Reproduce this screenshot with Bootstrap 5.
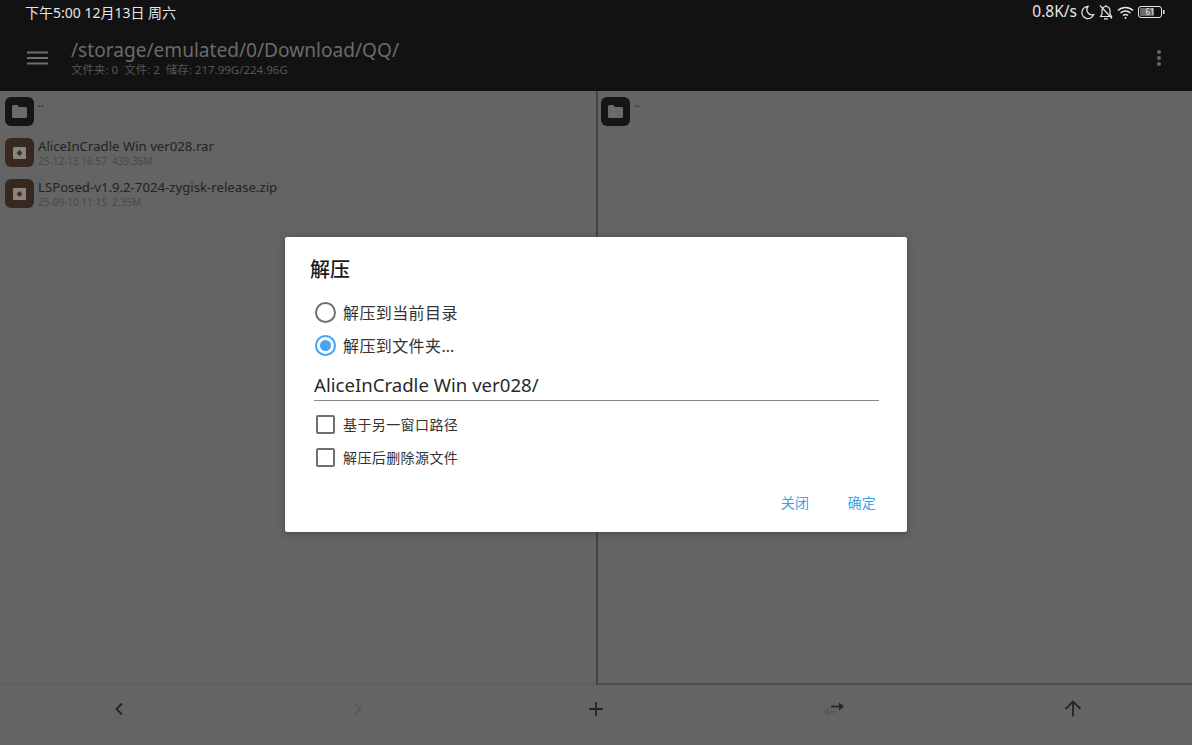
<!DOCTYPE html>
<html lang="zh-CN">

<head>
    <meta charset="UTF-8">
    <title>解压</title>
    <meta name="viewport" content="width=device-width, initial-scale=1.0">
    <link href="https://cdn.jsdelivr.net/npm/bootstrap@5.3.0/dist/css/bootstrap.min.css" rel="stylesheet">
    <style>
        html, body { height: 100%; }
        body {
            background: #646464;
            overflow: hidden;
            font-family: "Noto Sans", "Noto Sans CJK SC", sans-serif;
            color: #1c1c1c;
        }
        .app-head { height: 91px; background: #121212; flex: none; }
        .status-row { height: 24px; padding: 0 27px 0 25px; color: #e6e6e6; font-size: 14px; }
        .status-right { font-size: 15.5px; gap: 3px; }
        .title-row { height: 67px; padding: 0 31px 0 27px; }
        .menu-icon { margin-right: 23px; }
        .path-title { font-size: 19.1px; line-height: 25px; color: #6b6b6b; }
        .path-sub { font-size: 11.5px; line-height: 14px; color: #565656; white-space: pre; }

        .panes { flex: 1 1 auto; min-height: 0; }
        .pane { flex: 1 1 0; padding: 5px; }
        .pane-right { border-left: 2px solid #444; border-bottom: 2px solid #4c4c4c; flex: 0 0 596px; padding-left: 3px; }
        .pane-left { border-bottom: 1px solid #5a5a5a; }
        .file-row { height: 41px; gap: 4px; }
        .file-tile {
            width: 29px; height: 29px; border-radius: 6px;
            background: #37291f; flex: none; margin-top: 1px;
        }
        .file-tile.is-dir { background: #151515; }
        .file-name { font-size: 13.2px; line-height: 18px; color: #222; }
        .file-name.is-up { line-height: 12px; font-size: 11px; margin-top: 1px; }
        .file-meta { font-size: 10px; line-height: 13px; color: #484848; white-space: pre; }

        .tool-bar { height: 60px; flex: none; padding-bottom: 13px; }
        .tool-btn { flex: 1 1 0; }

        .dim-dialog {
            position: absolute; left: 285px; top: 237px;
            width: 622px; height: 295px;
            background: #fff; border-radius: 2px;
            box-shadow: 0 2px 8px rgba(0, 0, 0, .25);
            padding: 20px 29px 0 25px;
            color: #222;
        }
        .dlg-title { font-size: 20px; line-height: 26px; font-weight: 500; margin-bottom: 13px; color: #1a1a1a; }
        .opt-row { height: 33px; padding-left: 5px; gap: 7px; font-size: 16px; color: #333; letter-spacing: .4px; }
        .opt-row.is-small { font-size: 14px; }
        .radio-mark { width: 21px; height: 21px; border-radius: 50%; border: 2px solid #6f6f6f; flex: none; }
        .radio-mark.is-on { border-color: #42a5f5; padding: 3px; }
        .radio-mark.is-on::after { content: ""; display: block; width: 11px; height: 11px; border-radius: 50%; background: #42a5f5; }
        .check-mark { width: 19px; height: 19px; margin: 0 1px; border-radius: 2px; border: 2px solid #6f6f6f; flex: none; }
        .name-input {
            border: 0; border-bottom: 1.5px solid #8a8a8a; border-radius: 0;
            padding: 0 0 1px; margin: 7px 0 7px 4px; width: 565px; height: 32px;
            font-size: 18.6px; color: #2a2a2a; background: transparent; outline: 0;
            font-family: "Noto Sans", sans-serif;
        }
        .dlg-actions { gap: 38px; margin-top: 19px; padding-right: 2px; }
        .dlg-link { font-size: 14px; line-height: 20px; color: #42a0e6; letter-spacing: .3px; padding: 0; border: 0; background: none; }
    </style>
</head>

<body class="d-flex flex-column position-relative">

    <header class="app-head d-flex flex-column">
        <div class="status-row d-flex align-items-center justify-content-between">
            <span>下午5:00 12月13日 周六</span>
            <span class="status-right d-flex align-items-center">
                <span>0.8K/s</span>
                <svg width="15" height="15" viewBox="0 0 15 15" fill="none" stroke="#e6e6e6" stroke-width="1.3"><path d="M8 1.5a6 6 0 1 0 5.5 8.2A5.2 5.2 0 0 1 8 1.5z"/></svg>
                <svg width="16" height="16" viewBox="0 0 16 16" fill="none" stroke="#e6e6e6" stroke-width="1.2"><path d="M2.5 12.5h11L12 10V6.500a4 4 0 0 0-8 0V10z"/><path d="M8 1v1.500M6 14.800h4M2 1.500l12 13"/></svg>
                <svg width="18" height="15" viewBox="0 0 18 15" fill="none" stroke="#e6e6e6" stroke-width="1.5"><path d="M1 5.5a11 11 0 0 1 15 0M3.500 8a7.500 7.500 0 0 1 10 0M6 10.500a3.800 3.800 0 0 1 5 0"/><circle cx="8.500" cy="13" r="1" fill="#e6e6e6" stroke="none"/></svg>
                <svg width="27" height="12" viewBox="0 0 27 12"><rect x=".5" y=".5" width="23" height="11" rx="2.500" fill="none" stroke="#e6e6e6"/><rect x="2" y="2" width="14" height="8" rx="1" fill="#6a6a6a"/><rect x="25" y="4" width="1.500" height="4" fill="#e6e6e6"/><text x="12" y="9" text-anchor="middle" font-size="8" fill="#e6e6e6" font-family="Noto Sans">61</text></svg>
            </span>
        </div>
        <div class="title-row d-flex align-items-center">
            <svg class="menu-icon flex-none" width="21" height="14" viewBox="0 0 21 14" stroke="#6e6e6e" stroke-width="2"><path d="M0 1.500h21M0 7h21M0 12.500h21"/></svg>
            <div class="flex-grow-1">
                <div class="path-title">/storage/emulated/0/Download/QQ/</div>
                <div class="path-sub">文件夹: 0  文件: 2  储存: 217.99G/224.96G</div>
            </div>
            <svg width="4" height="16" viewBox="0 0 4 16" fill="#666"><circle cx="2" cy="2" r="2"/><circle cx="2" cy="8" r="2"/><circle cx="2" cy="14" r="2"/></svg>
        </div>
    </header>

    <main class="panes d-flex">
        <section class="pane pane-left">
            <div class="file-row d-flex">
                <span class="file-tile is-dir d-flex align-items-center justify-content-center">
                    <svg width="15" height="13" viewBox="0 0 15 13" fill="#6b6b6b"><path d="M0 1.500A1.500 1.500 0 0 1 1.500 0h4L7 2h6.500A1.500 1.500 0 0 1 15 3.500v8a1.500 1.500 0 0 1-1.500 1.500h-12A1.500 1.500 0 0 1 0 11.500z"/></svg>
                </span>
                <div class="file-name is-up">..</div>
            </div>
            <div class="file-row d-flex">
                <span class="file-tile d-flex align-items-center justify-content-center">
                    <svg width="13" height="12" viewBox="0 0 13 12"><rect width="13" height="12" rx="1" fill="#8a847f"/><path d="M6.500 3l3 3-3 3-3-3z" fill="#3d302b"/></svg>
                </span>
                <div>
                    <div class="file-name">AliceInCradle Win ver028.rar</div>
                    <div class="file-meta">25-12-13 16:57  439.36M</div>
                </div>
            </div>
            <div class="file-row d-flex">
                <span class="file-tile d-flex align-items-center justify-content-center">
                    <svg width="13" height="12" viewBox="0 0 13 12"><rect width="13" height="12" rx="1" fill="#8a847f"/><path d="M6.500 3l3 3-3 3-3-3z" fill="#3d302b"/></svg>
                </span>
                <div>
                    <div class="file-name">LSPosed-v1.9.2-7024-zygisk-release.zip</div>
                    <div class="file-meta">25-09-10 11:15  2.35M</div>
                </div>
            </div>
        </section>
        <section class="pane pane-right">
            <div class="file-row d-flex">
                <span class="file-tile is-dir d-flex align-items-center justify-content-center">
                    <svg width="15" height="13" viewBox="0 0 15 13" fill="#6b6b6b"><path d="M0 1.500A1.500 1.500 0 0 1 1.500 0h4L7 2h6.500A1.500 1.500 0 0 1 15 3.500v8a1.500 1.500 0 0 1-1.500 1.500h-12A1.500 1.500 0 0 1 0 11.500z"/></svg>
                </span>
                <div class="file-name is-up">..</div>
            </div>
        </section>
    </main>

    <nav class="tool-bar d-flex align-items-center">
        <div class="tool-btn d-flex justify-content-center">
            <svg width="10" height="14" viewBox="0 0 10 14" fill="none" stroke="#262626" stroke-width="2"><path d="M8 1.500L2.500 7 8 12.500"/></svg>
        </div>
        <div class="tool-btn d-flex justify-content-center">
            <svg width="10" height="14" viewBox="0 0 10 14" fill="none" stroke="#545454" stroke-width="1.500"><path d="M2 1.500L7.500 7 2 12.500"/></svg>
        </div>
        <div class="tool-btn d-flex justify-content-center">
            <svg width="16" height="16" viewBox="0 0 16 16" stroke="#262626" stroke-width="1.800"><path d="M8 1v14M1 8h14"/></svg>
        </div>
        <div class="tool-btn d-flex justify-content-center">
            <svg width="22" height="16" viewBox="0 0 22 16" fill="none"><path d="M8 5.500h11" stroke="#262626" stroke-width="1.800"/><path d="M16 1.500l5 4-5 4z" fill="#262626"/><path d="M3 11h10" stroke="#555" stroke-width="1.500"/><path d="M6 7.500L1.500 11 6 14.500" stroke="#555" stroke-width="1.200"/></svg>
        </div>
        <div class="tool-btn d-flex justify-content-center">
            <svg width="18" height="17" viewBox="0 0 18 17" fill="none" stroke="#262626" stroke-width="1.800"><path d="M9 16.500V1.500M1.500 9L9 1.500 16.500 9"/></svg>
        </div>
    </nav>

    <div class="dim-dialog">
        <div class="dlg-title">解压</div>
        <div class="opt-row d-flex align-items-center"><span class="radio-mark"></span>解压到当前目录</div>
        <div class="opt-row d-flex align-items-center"><span class="radio-mark is-on"></span>解压到文件夹…</div>
        <input class="name-input d-block" type="text" value="AliceInCradle Win ver028/">
        <div class="opt-row is-small d-flex align-items-center"><span class="check-mark"></span>基于另一窗口路径</div>
        <div class="opt-row is-small d-flex align-items-center"><span class="check-mark"></span>解压后删除源文件</div>
        <div class="dlg-actions d-flex justify-content-end">
            <button class="dlg-link" type="button">关闭</button>
            <button class="dlg-link" type="button">确定</button>
        </div>
    </div>

    <script src="https://cdn.jsdelivr.net/npm/bootstrap@5.3.0/dist/js/bootstrap.bundle.min.js"></script>
</body>

</html>
